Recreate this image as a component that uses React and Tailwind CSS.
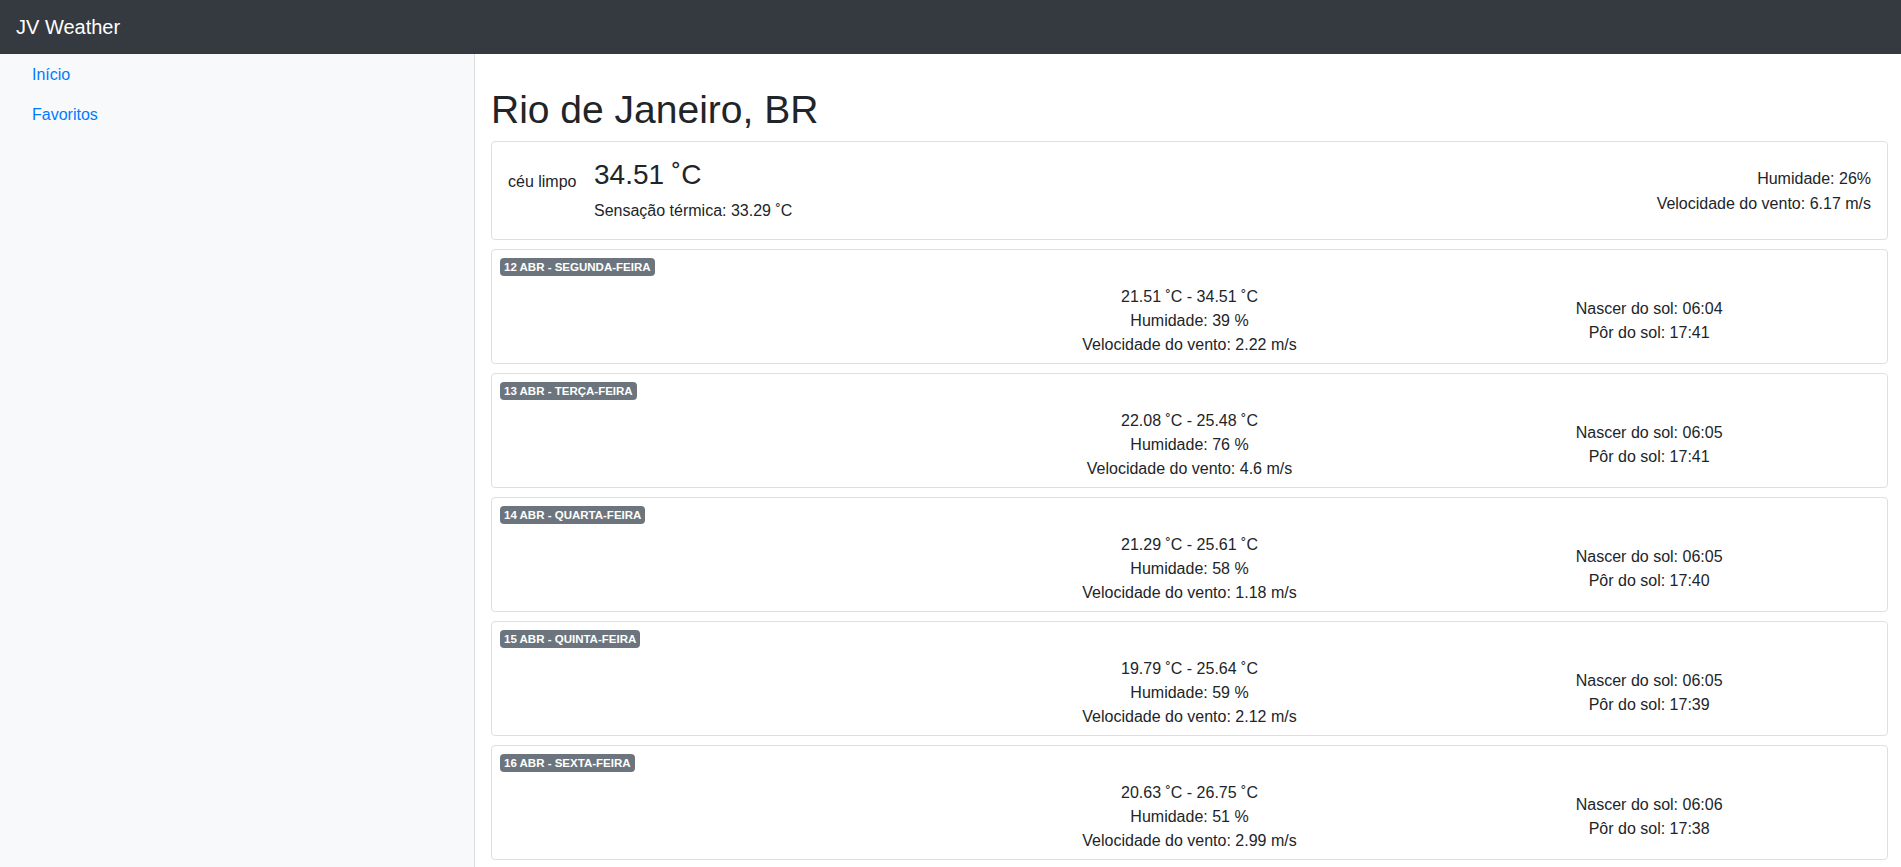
import React from "react";

const forecast = [
  { day: "12 ABR - SEGUNDA-FEIRA", min: "21.51", max: "34.51", hum: "39", wind: "2.22", rise: "06:04", set: "17:41" },
  { day: "13 ABR - TERÇA-FEIRA", min: "22.08", max: "25.48", hum: "76", wind: "4.6", rise: "06:05", set: "17:41" },
  { day: "14 ABR - QUARTA-FEIRA", min: "21.29", max: "25.61", hum: "58", wind: "1.18", rise: "06:05", set: "17:40" },
  { day: "15 ABR - QUINTA-FEIRA", min: "19.79", max: "25.64", hum: "59", wind: "2.12", rise: "06:05", set: "17:39" },
  { day: "16 ABR - SEXTA-FEIRA", min: "20.63", max: "26.75", hum: "51", wind: "2.99", rise: "06:06", set: "17:38" },
];

function Navbar() {
  return (
    <nav className="h-[54px] shrink-0 bg-[#343a40] flex items-center px-4">
      <span className="text-white text-[20px] leading-[30px]">JV Weather</span>
    </nav>
  );
}

function Sidebar() {
  return (
    <aside className="w-[475px] shrink-0 bg-[#f8f9fa] shadow-[inset_-1px_0_0_rgba(0,0,0,0.1)] pt-px">
      <ul className="flex flex-col">
        <li>
          <a href="#" className="block px-4 ml-4 py-2 text-[16px] leading-6 text-[#007bff]">Início</a>
        </li>
        <li>
          <a href="#" className="block px-4 ml-4 py-2 text-[16px] leading-6 text-[#007bff]">Favoritos</a>
        </li>
      </ul>
    </aside>
  );
}

function CurrentCard() {
  return (
    <div className="border border-[#dfdfdf] rounded-[4px] bg-white p-4 flex mb-[9px]">
      <div className="w-[86px] shrink-0 pt-3 leading-6">céu limpo</div>
      <div>
        <h3 className="text-[28px] leading-[34px] font-medium mb-[7px]">34.51 ˚C</h3>
        <p className="leading-6">Sensação térmica: 33.29 ˚C</p>
      </div>
      <div className="flex-1 self-center text-right leading-[25px] text-[#212529]">
        <p>Humidade: 26%</p>
        <p>Velocidade do vento: 6.17 m/s</p>
      </div>
    </div>
  );
}

function ForecastCard({ item }) {
  return (
    <div className="border border-[#dfdfdf] rounded-[4px] bg-white px-2 pt-2 pb-[6px] mb-[9px]">
      <div className="flex mb-[9px]">
        <span className="h-[18px] px-[4px] rounded-[4px] bg-[#6c757d] text-white text-[11.5px] leading-[18px] font-bold">
          {item.day}
        </span>
      </div>
      <div className="grid grid-cols-3 items-center text-center leading-6">
        <div></div>
        <div>
          <p>{item.min} ˚C - {item.max} ˚C</p>
          <p>Humidade: {item.hum} %</p>
          <p>Velocidade do vento: {item.wind} m/s</p>
        </div>
        <div>
          <p>Nascer do sol: {item.rise}</p>
          <p>Pôr do sol: {item.set}</p>
        </div>
      </div>
    </div>
  );
}

export default function App() {
  return (
    <div
      className="h-screen overflow-hidden flex flex-col bg-white text-[#212529] text-[16px]"
      style={{ fontFamily: '"Liberation Sans", Arial, sans-serif' }}
    >
      <Navbar />
      <div className="flex flex-1 min-h-0">
        <Sidebar />
        <main className="flex-1 pl-4 pr-[13px] pt-8">
          <h1 className="text-[39px] leading-[48px] font-medium mb-[7px]">Rio de Janeiro, BR</h1>
          <CurrentCard />
          {forecast.map((item) => (
            <ForecastCard key={item.day} item={item} />
          ))}
        </main>
      </div>
    </div>
  );
}
